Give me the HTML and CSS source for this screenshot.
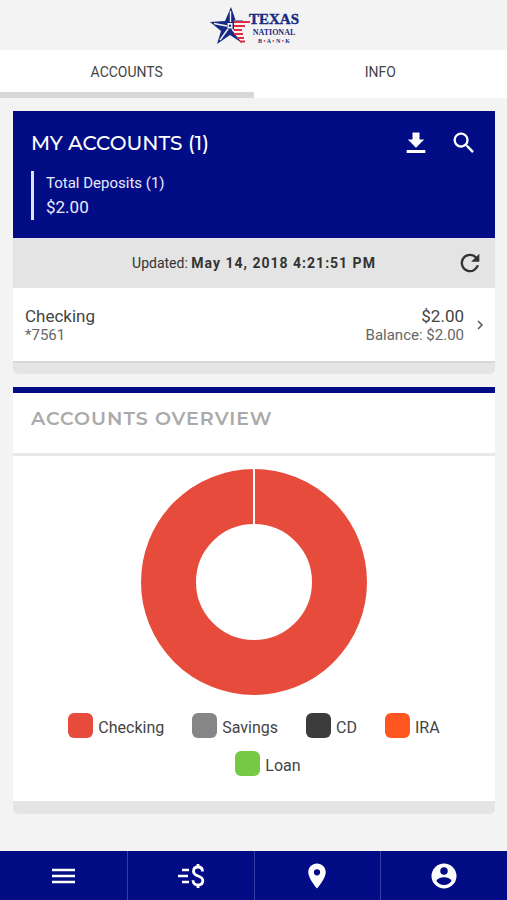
FILE: index.html
```html
<!DOCTYPE html>
<html lang="en">
<head>
<meta charset="utf-8">
<meta name="viewport" content="width=device-width, initial-scale=1">
<title>Texas National Bank</title>
<link rel="stylesheet" href="styles.css">
</head>
<body>
<header class="brand">
  <svg class="logo" viewBox="0 0 90 44" role="img" aria-label="Texas National Bank">
    <path fill="#172a83" d="M22 3 L26.500 16 L34 16 V18 L27 23 L28 31 L36 38 L33 39 L21 31 L8 40 L12 27 L1 18 L16 17 Z"/>
    <path fill="none" stroke="#f3f3f3" stroke-width="1.400" d="M21.500 7 V18 M5 19.500 L18 22 M11 36 L19 25 M23 25 L31 35"/>
    <path fill="#f3f3f3" d="M18.500 19 H23.500 V24.500 H18.500 Z"/>
    <circle cx="21" cy="21.800" r="1.200" fill="#172a83"/>
    <path fill="#f3f3f3" d="M25 16.500 H42 V40 H34 L25 29 Z"/>
    <path fill="none" stroke="#e02d43" stroke-width="2.200" d="M25 18 H41 M25 22 H36 M25 26 H33 M25 30 H34 M28 34 H35 M31 37.500 H36"/>
    <g fill="#1b2b83" text-anchor="middle" font-family="Liberation Serif, serif" font-weight="700">
      <text x="65" y="20" font-size="15" stroke="#1b2b83" stroke-width=".4">TEXAS</text>
      <text x="65" y="31" font-size="8">NATIONAL</text>
      <text x="65" y="39" font-size="6">B <tspan fill="#e02d43">•</tspan> A <tspan fill="#e02d43">•</tspan> N <tspan fill="#e02d43">•</tspan> K</text>
    </g>
  </svg>
</header>
<nav class="tabs" aria-label="Sections">
  <a class="tab tab-active" href="#accounts" aria-current="page">ACCOUNTS</a>
  <a class="tab" href="#info">INFO</a>
</nav>
<main class="content">
  <section class="card" id="accounts">
    <div class="summary">
      <div class="summary-head">
        <h1 class="title">MY ACCOUNTS (1)</h1>
        <div class="actions">
          <button class="icon-button" type="button" aria-label="Download"><svg class="icon" viewBox="0 0 24 24"><path d="M19 9h-4V3H9v6H5l7 7 7-7zM4 18v2.500h16V18z"/></svg></button>
          <button class="icon-button" type="button" aria-label="Search"><svg class="icon" viewBox="0 0 24 24"><path d="M15.500 14h-.79l-.28-.27A6.471 6.471 0 0 0 16 9.500 6.500 6.500 0 1 0 9.500 16c1.610 0 3.090-.59 4.230-1.570l.27.28v.79l5 4.990L20.490 19l-4.990-5zm-6 0C7.010 14 5 11.990 5 9.500S7.010 5 9.500 5 14 7.010 14 9.500 11.990 14 9.500 14z"/></svg></button>
        </div>
      </div>
      <div class="totals">
        <div class="totals-label">Total Deposits (1)</div>
        <div class="totals-value">$2.00</div>
      </div>
    </div>
    <div class="updated">
      <p class="updated-text">Updated: <strong class="updated-time">May 14, 2018 4:21:51 PM</strong></p>
      <button class="icon-button refresh" type="button" aria-label="Refresh"><svg class="icon" viewBox="0 0 24 24"><path d="M17.650 6.350A7.958 7.958 0 0 0 12 4a8 8 0 1 0 7.730 10h-2.080A6 6 0 1 1 12 6c1.660 0 3.140.69 4.220 1.780L13 11h7V4l-2.350 2.350z"/></svg></button>
    </div>
    <a class="account" href="#checking">
      <span class="account-col"><span class="account-main">Checking</span><span class="account-sub">*7561</span></span>
      <span class="account-col account-amounts"><span class="account-main">$2.00</span><span class="account-sub">Balance: $2.00</span></span>
      <svg class="chevron" viewBox="0 0 8 12"><path d="M2 2l4 4-4 4" fill="none" stroke="#555" stroke-width="1.500"/></svg>
    </a>
    <div class="card-foot card-foot-line"></div>
  </section>
  <section class="card overview">
    <h2 class="title overview-title">ACCOUNTS OVERVIEW</h2>
    <div class="overview-body">
      <svg class="chart" viewBox="0 0 226 226" role="img" aria-label="Checking 100%">
        <circle cx="113" cy="113" r="85.500" fill="none" stroke="#e64b3c" stroke-width="55"/>
        <path d="M113 0V56" stroke="#fff" stroke-width="2"/>
      </svg>
      <ul class="legend">
        <li class="legend-item"><span class="swatch checking"></span>Checking</li>
        <li class="legend-item"><span class="swatch savings"></span>Savings</li>
        <li class="legend-item"><span class="swatch cd"></span>CD</li>
        <li class="legend-item"><span class="swatch ira"></span>IRA</li>
        <li class="legend-item"><span class="swatch loan"></span>Loan</li>
      </ul>
    </div>
    <div class="card-foot"></div>
  </section>
</main>
<nav class="bottom-bar" aria-label="Main">
  <a class="bottom-item" href="#menu" aria-label="Menu"><svg class="bar-icon" viewBox="0 0 30 30"><path fill="none" stroke="#fff" stroke-width="2.500" d="M4 9h23M4 15h23M4 21h23"/></svg></a>
  <a class="bottom-item" href="#transfer" aria-label="Transfers"><svg class="bar-icon" viewBox="0 0 30 30"><path fill="none" stroke="#fff" stroke-width="2.400" d="M6 9h7M2 15h10M6 21h7"/><path fill="none" stroke="#fff" stroke-width="2.800" d="M26.500 10.500C26.500 7.500 24.500 6 22 6s-4.500 1.500-4.500 4.200c0 6 9.300 3.600 9.300 9.300 0 3-2.200 4.500-4.800 4.500s-5-1.500-5-4.800M22 3v3M22 24v3"/></svg></a>
  <a class="bottom-item" href="#locations" aria-label="Locations"><svg class="bar-icon" viewBox="0 0 24 24"><path d="M12 2C8.130 2 5 5.130 5 9c0 5.250 7 13 7 13s7-7.750 7-13c0-3.870-3.130-7-7-7zm0 9.500a2.500 2.500 0 1 1 0-5 2.500 2.500 0 0 1 0 5z"/></svg></a>
  <a class="bottom-item" href="#profile" aria-label="Profile"><svg class="bar-icon" viewBox="0 0 24 24"><path d="M12 2a10 10 0 1 0 0 20 10 10 0 0 0 0-20zm0 3a3 3 0 1 1 0 6 3 3 0 0 1 0-6zm0 14.200a7.200 7.200 0 0 1-6-3.220c.03-1.990 4-3.080 6-3.080 1.990 0 5.970 1.090 6 3.080a7.200 7.200 0 0 1-6 3.220z"/></svg></a>
</nav>
</body>
</html>
```
FILE: styles.css
```css
* {
  box-sizing: border-box;
}

body {
  margin: 0;
  min-height: 100vh;
  display: flex;
  flex-direction: column;
  background: #f3f3f3;
  color: #444;
  font-family: Roboto, "Liberation Sans", sans-serif;
  font-size: 16px;
  line-height: 20px;
}

a {
  color: inherit;
  text-decoration: none;
}

.brand {
  display: flex;
  justify-content: center;
  padding: 4px 0 2px;
}

.logo {
  width: 90px;
  height: 44px;
}

.tabs {
  display: grid;
  grid-template-columns: 1fr 1fr;
  background: #fff;
}

.tab {
  padding: 12px 0 10px;
  border-bottom: 6px solid transparent;
  text-align: center;
  font-size: 14px;
}

.tab-active {
  border-bottom-color: #d8d8d8;
}

.content {
  display: flex;
  flex-direction: column;
  gap: 13px;
  padding: 13px 12px 13px 13px;
}

.summary {
  padding: 16px 17px 18px 18px;
  background: #020d85;
  color: #fff;
}

.summary-head {
  display: flex;
  align-items: center;
  justify-content: space-between;
  height: 32px;
}

.title {
  margin: 0;
  font-family: Montserrat, Inter, sans-serif;
  font-size: 20px;
  font-weight: 500;
  line-height: 24px;
}

.actions {
  display: flex;
  gap: 20px;
}

.icon-button {
  display: flex;
  padding: 0;
  border: 0;
  background: none;
  color: inherit;
}

.icon {
  width: 28px;
  height: 28px;
  fill: currentColor;
}

.totals {
  margin-top: 12px;
  padding-left: 12px;
  border-left: 3px solid #dfe2ff;
  color: #e8eaff;
}

.totals-label {
  font-size: 15px;
  line-height: 24px;
}

.totals-value {
  font-size: 17px;
  line-height: 25px;
}

.updated {
  display: grid;
  grid-template-columns: 1fr auto 1fr;
  align-items: center;
  height: 50px;
  padding: 0 11px;
  background: #e4e4e4;
  color: #333;
}

.updated-text {
  grid-column: 2;
  margin: 0;
  font-size: 14px;
}

.updated-time {
  letter-spacing: 1px;
}

.refresh {
  justify-self: end;
}

.account {
  display: flex;
  align-items: center;
  height: 73px;
  padding: 0 11px 0 12px;
  background: #fff;
}

.account-col {
  display: flex;
  flex-direction: column;
}

.account-main {
  font-size: 17px;
}

.account-sub {
  color: #666;
  font-size: 15px;
  line-height: 18px;
}

.account-amounts {
  margin-left: auto;
  text-align: right;
}

.chevron {
  width: 8px;
  height: 12px;
  margin-left: 12px;
}

.card-foot {
  height: 13px;
  border-radius: 0 0 5px 5px;
  background: #e4e4e4;
}

.card-foot-line {
  border-top: 2px solid #d8d8d8;
}

.overview {
  border-top: 6px solid #020d85;
}

.overview-title {
  padding: 14px 18px 22px;
  border-bottom: 3px solid #e8e8e8;
  background: #fff;
  color: #aaa;
  font-size: 19px;
  font-weight: 600;
  letter-spacing: 1px;
}

.overview-body {
  display: flex;
  flex-direction: column;
  align-items: center;
  gap: 18px;
  padding: 13px 16px 21px;
  background: #fff;
}

.chart {
  width: 226px;
  height: 226px;
}

.legend {
  display: flex;
  flex-wrap: wrap;
  justify-content: center;
  row-gap: 9px;
  margin: 0;
  padding: 0;
  list-style: none;
}

.legend-item {
  display: flex;
  align-items: flex-start;
  gap: 5px;
  line-height: 29px;
}

.legend-item + .legend-item {
  margin-left: 28px;
}

.swatch {
  width: 25px;
  height: 25px;
  border-radius: 6px;
}

.checking {
  background: #e64b3c;
}

.savings {
  background: #868686;
}

.cd {
  background: #3c3c3c;
}

.ira {
  background: #ff571f;
}

.loan {
  background: #76ca43;
}

.bottom-bar {
  display: grid;
  grid-template-columns: repeat(4, 1fr);
  height: 49px;
  margin-top: auto;
  background: #020d85;
}

.bottom-item {
  display: flex;
  align-items: center;
  justify-content: center;
}

.bottom-item + .bottom-item {
  border-left: 1px solid #343da0;
}

.bar-icon {
  width: 30px;
  height: 30px;
  fill: #fff;
}
```
